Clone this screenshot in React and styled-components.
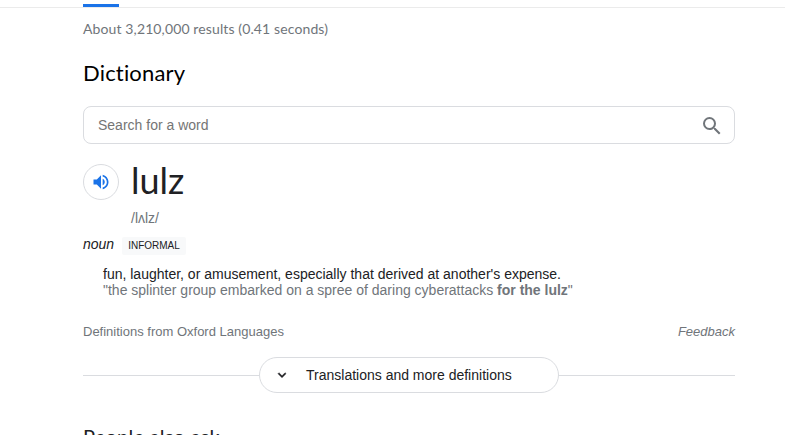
import React from "react";
import styled, { createGlobalStyle } from "styled-components";

const GlobalStyle = createGlobalStyle`
  * { box-sizing: border-box; }
  html, body { margin: 0; background: #fff; overflow: hidden; }
  body { font-family: "Liberation Sans", Arial, sans-serif; color: #202124; }
`;

const Page = styled.div`
  width: 785px;
  height: 435px;
  overflow: hidden;
`;

const TabBar = styled.div`
  height: 8px;
  padding: 4px 0 0 83px;
  border-bottom: 1px solid #ebebeb;
`;

const ActiveTab = styled.div`
  width: 36px;
  height: 3px;
  background: #1a73e8;
`;

const Content = styled.main`
  width: 652px;
  margin-left: 83px;
`;

const Brand = styled.div`
  font-family: Lato, "Open Sans", sans-serif;
  font-size: ${(p) => p.$size}px;
  line-height: ${(p) => p.$line}px;
  letter-spacing: ${(p) => p.$spacing || 0}px;
  color: ${(p) => p.$color || "#202124"};
  margin-top: ${(p) => p.$top || 0}px;
  margin-bottom: ${(p) => p.$bottom || 0}px;
  font-variant-ligatures: none;
  white-space: nowrap;
`;

const SearchBox = styled.div`
  display: flex;
  align-items: center;
  justify-content: space-between;
  height: 38px;
  margin-top: 16px;
  padding: 1px 10px 0 14px;
  border: 1px solid #dadce0;
  border-radius: 8px;
  font-size: 14px;
  line-height: 16px;
  color: #757575;
  span { margin-top: -1px; }
`;

const Headword = styled.div`
  display: flex;
  gap: 12px;
  height: 36px;
  margin-top: 20px;
  align-items: center;
`;

const SpeakButton = styled.button`
  display: flex;
  align-items: center;
  justify-content: center;
  width: 36px;
  height: 36px;
  padding: 0;
  border: 1px solid #dadce0;
  border-radius: 50%;
  background: #fff;
`;

const Phonetic = styled.div`
  margin: 10px 0 0 48px;
  font-size: 14px;
  line-height: 16px;
  color: #70757a;
`;

const WordClass = styled.div`
  display: flex;
  align-items: center;
  gap: 8px;
  height: 18px;
  margin-top: 11px;
  font-size: 14px;
  line-height: 16px;
  em { margin-top: -4px; }
`;

const Label = styled.span`
  padding: 0 6px;
  border-radius: 2px;
  background: #f8f9fa;
  font-size: 10px;
  line-height: 18px;
`;

const Definition = styled.div`
  margin: 11px 0 0 20px;
  font-size: 14px;
  line-height: 16px;
  white-space: nowrap;
`;

const Example = styled.div`
  color: #70757a;
`;

const Credits = styled.div`
  display: flex;
  justify-content: space-between;
  margin-top: 26px;
  font-size: 13px;
  line-height: 16px;
  color: #70757a;
`;

const Expander = styled.div`
  display: flex;
  align-items: center;
  margin-top: 17px;
  &::before, &::after {
    content: "";
    flex: 1;
    height: 1px;
    background: #dadce0;
  }
`;

const ExpandButton = styled.button`
  display: flex;
  align-items: center;
  gap: 16px;
  width: 300px;
  height: 36px;
  padding: 0 0 0 14px;
  border: 1px solid #dadce0;
  border-radius: 18px;
  background: #fff;
  color: #202124;
  font: 14px/16px "Liberation Sans", Arial, sans-serif;
  white-space: nowrap;
`;

const Icon = ({ size, color, d, weight = 0 }) => (
  <svg width={size} height={size} viewBox="0 0 24 24" fill={color} stroke={color} strokeWidth={weight}>
    <path d={d} />
  </svg>
);

const SEARCH = "M15.5 14h-.79l-.28-.27A6.471 6.471 0 0 0 16 9.5 6.5 6.5 0 1 0 9.5 16c1.61 0 3.09-.59 4.23-1.57l.27.28v.79l5 4.99L20.49 19l-4.99-5zm-6 0C7.01 14 5 11.99 5 9.5S7.01 5 9.5 5 14 7.01 14 9.5 11.99 14 9.5 14z";
const VOLUME = "M3 9v6h4l5 5V4L7 9H3zm13.5 3c0-1.77-1.02-3.29-2.5-4.03v8.05c1.48-.73 2.5-2.25 2.5-4.02zM14 3.23v2.06c2.89.86 5 3.54 5 6.71s-2.11 5.85-5 6.71v2.06c4.01-.91 7-4.49 7-8.77s-2.99-7.86-7-8.77z";
const CHEVRON = "M7.41 8.59L12 13.17l4.59-4.58L18 10l-6 6-6-6 1.41-1.41z";

export default function App() {
  return (
    <Page>
      <GlobalStyle />
      <TabBar><ActiveTab /></TabBar>
      <Content>
        <Brand $size={14} $line={18} $top={12} $spacing={0.12} $color="#70757a">
          About 3,210,000 results (0.41 seconds)
        </Brand>
        <Brand $size={22} $line={28} $top={21} $bottom={19} $spacing={0.18} $color="#000">
          Dictionary
        </Brand>
        <SearchBox>
          <span>Search for a word</span>
          <Icon size={24} color="#70757a" d={SEARCH} />
        </SearchBox>
        <Headword>
          <SpeakButton aria-label="Pronounce">
            <Icon size={20} color="#1a73e8" d={VOLUME} />
          </SpeakButton>
          <Brand $size={36} $line={36} $bottom={4}>lulz</Brand>
        </Headword>
        <Phonetic>/lʌlz/</Phonetic>
        <WordClass><em>noun</em><Label>INFORMAL</Label></WordClass>
        <Definition>
          <div>fun, laughter, or amusement, especially that derived at another's expense.</div>
          <Example>"the splinter group embarked on a spree of daring cyberattacks <b>for the lulz</b>"</Example>
        </Definition>
        <Credits><span>Definitions from Oxford Languages</span><em>Feedback</em></Credits>
        <Expander>
          <ExpandButton>
            <Icon size={16} color="#202124" d={CHEVRON} weight={0.7} />
            Translations and more definitions
          </ExpandButton>
        </Expander>
        <Brand $size={20} $line={26} $top={30} $spacing={0.22}>People also ask</Brand>
      </Content>
    </Page>
  );
}
